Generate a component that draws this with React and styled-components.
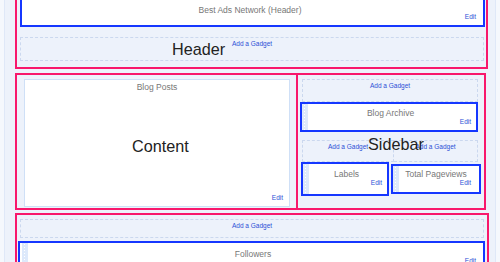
import React from 'react'
import styled, { createGlobalStyle } from 'styled-components'

const PINK = '#f8186c'
const BLUE = '#1537ff'
const LINK = '#2b4fd6'

const GlobalStyle = createGlobalStyle`
  body {
    margin: 0;
    background: #f5f8fd;
    font-family: 'Liberation Sans', Arial, sans-serif;
  }
`

const Canvas = styled.div`
  margin: -9px 4px 0 4px;
  padding: 0 7px 0 10px;
  background: #edf2fb;
  border-left: 1px solid #dfe8f8;
  border-right: 1px solid #dfe8f8;
`

const Section = styled.div`
  position: relative;
  box-sizing: border-box;
  border: 2px solid ${PINK};
  display: flex;
  flex-direction: column;
`

const HeaderSection = styled(Section)`
  padding: 3px 1px 6px 3px;
`

const Row = styled.div`
  display: flex;
  margin: 4px 2px 0 0;
`

const MainSection = styled(Section)`
  width: 283px;
  padding: 4px 6px 1px 7px;
`

const SideSection = styled(Section)`
  flex: 1;
  border-left: 0;
  padding: 4px 2px 12px 1px;
`

const FooterSection = styled(Section)`
  margin: 3px -1px 0 0;
  padding: 4px 2px 0 1px;
`

const BigLabel = styled.div`
  position: absolute;
  left: ${p => p.$x}px;
  top: ${p => p.$y}px;
  font-size: 16.2px;
  line-height: 16px;
  color: #222;
  white-space: nowrap;
`

const AddGadget = styled.div`
  position: relative;
  box-sizing: border-box;
  height: ${p => p.$h}px;
  margin: ${p => p.$m || '0'};
  padding-top: 2px;
  border: 1px dashed #cbd8ef;
  ${p => p.$joined && 'border-left: 0;'}
  text-align: center;
  font-size: 6.5px;
  line-height: 8px;
  color: ${LINK};
`

const DashedRow = styled.div`
  display: grid;
  grid-template-columns: 92px 1fr;
  margin: 8px 4px 0 3px;
`

const WidgetRow = styled.div`
  display: grid;
  grid-template-columns: 88px 1fr;
  column-gap: 2px;
  align-items: start;
  margin: 0 1px 0 2px;
`

const Widget = styled.div`
  display: flex;
  border: 2px solid ${BLUE};
  background: #fff;
  margin: ${p => p.$m || '0'};
`

const Grip = styled.div`
  flex: none;
  width: 6px;
  margin-left: ${p => p.$ml || 0}px;
  background-color: #dde9fb;
  background-image: linear-gradient(#fff 50%, transparent 50%);
  background-size: 1px 3px;
  background-repeat: repeat-y;
  background-position: 2px 1px;
`

const WidgetBody = styled.div`
  flex: 1;
  display: flex;
  flex-direction: column;
  padding: ${p => p.$pt}px ${p => p.$pr || 5}px ${p => p.$pb}px 2px;
`

const Title = styled.div`
  text-align: center;
  font-size: 8.5px;
  line-height: 10px;
  color: #777;
  white-space: nowrap;
`

const Edit = styled.div`
  align-self: flex-end;
  margin-top: ${p => (p.$tight ? -2 : 0)}px;
  font-size: 6.5px;
  line-height: 7px;
  color: ${LINK};
`

const ContentBox = styled.div`
  position: relative;
  flex: 1;
  display: flex;
  flex-direction: column;
  background: #fff;
  border: 1px solid #cfe0f7;
  padding: 2px 6px 5px 6px;
`

const BottomEdit = styled(Edit)`
  margin-top: auto;
`

const GadgetBox = ({ title, grip = true, gripOffset, pt = 4, pb = 5, pr, tight, m }) => (
  <Widget $m={m}>
    {grip && <Grip $ml={gripOffset} />}
    <WidgetBody $pt={pt} $pb={pb} $pr={pr}>
      <Title>{title}</Title>
      <Edit $tight={tight}>Edit</Edit>
    </WidgetBody>
  </Widget>
)

const App = () => (
  <>
    <GlobalStyle />
    <Canvas>
      <HeaderSection>
        <GadgetBox title='Best Ads Network (Header)' grip={false} pt={7} pb={5} pr={7} tight />
        <AddGadget $h={24} $m='10px 1px 0 0'>
          Add a Gadget
          <BigLabel $x={151} $y={2.6}>Header</BigLabel>
        </AddGadget>
      </HeaderSection>

      <Row>
        <MainSection>
          <ContentBox>
            <Title>Blog Posts</Title>
            <BigLabel $x={107} $y={58}>Content</BigLabel>
            <BottomEdit>Edit</BottomEdit>
          </ContentBox>
        </MainSection>

        <SideSection>
          <AddGadget $h={23} $m='0 4px 0 3px'>Add a Gadget</AddGadget>
          <GadgetBox title='Blog Archive' m='0 4px 0 1px' />
          <DashedRow>
            <AddGadget $h={22}>Add a Gadget</AddGadget>
            <AddGadget $h={22} $joined>Add a Gadget</AddGadget>
          </DashedRow>
          <WidgetRow>
            <GadgetBox title='Labels' pt={5} pb={8} pr={5} />
            <GadgetBox title='Total Pageviews' pt={3} pb={6} pr={8} m='2px 0 0 0' />
          </WidgetRow>
          <BigLabel $x={70} $y={61}>Sidebar</BigLabel>
        </SideSection>
      </Row>

      <FooterSection>
        <AddGadget $h={19} $m='0 1px 0 2px'>Add a Gadget</AddGadget>
        <GadgetBox title='Followers' m='3px 0 0 0' gripOffset={2} pt={6} pb={6} pr={7} tight />
      </FooterSection>
    </Canvas>
  </>
)

export default App
